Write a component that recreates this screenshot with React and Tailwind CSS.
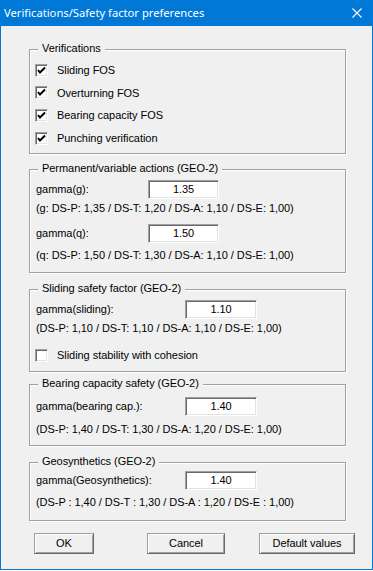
import React from 'react';

const font = { fontFamily: '"Liberation Sans", Arial, sans-serif', letterSpacing: '-0.05px' };

const CheckBox = ({ checked }) => (
  <div className="w-[13px] h-[13px] shrink-0 bg-white border border-t-[#a0a0a0] border-l-[#a0a0a0] border-b-white border-r-white shadow-[inset_1px_1px_0_#696969,inset_-1px_-1px_0_#e3e3e3]">
    {checked && (
      <svg width="11" height="11" viewBox="0 0 11 11" className="block">
        <polyline points="2,5 4,7.5 9,2.5" fill="none" stroke="#000" strokeWidth="2" />
      </svg>
    )}
  </div>
);

const Edit = ({ value, w }) => (
  <div
    className={`${w} h-[19px] bg-white flex items-center justify-center border border-t-[#a0a0a0] border-l-[#a0a0a0] border-b-white border-r-white shadow-[inset_1px_1px_0_#696969,inset_-1px_-1px_0_#e3e3e3] text-[11px] text-black`}
  >
    {value}
  </div>
);

const Group = ({ title, className, children }) => (
  <div
    className={`relative ml-[28px] w-[317px] border border-[#a0a0a0] shadow-[inset_1px_1px_0_#fff,1px_1px_0_#fff] ${className}`}
  >
    <span className="absolute left-[8px] top-[-8px] px-[4px] bg-[#f0f0f0] leading-[13px] text-[11px]">{title}</span>
    {children}
  </div>
);

const Button = ({ children, w }) => (
  <button
    className={`${w} h-[21px] bg-[#f0f0f0] text-[11px] text-black flex items-center justify-center border border-t-[#a0a0a0] border-l-[#a0a0a0] border-b-[#696969] border-r-[#696969] shadow-[inset_1px_1px_0_#fff,inset_-1px_-1px_0_#a0a0a0]`}
    style={font}
  >
    {children}
  </button>
);

export default function App() {
  const checks = ['Sliding FOS', 'Overturning FOS', 'Bearing capacity FOS', 'Punching verification'];

  return (
    <div className="w-[373px] h-[570px] bg-[#f0f0f0] border-x border-b border-[#0078d7] text-black" style={font}>
      {/* Title bar */}
      <div className="-mx-px h-[26px] bg-[#0078d7] flex items-center justify-between pl-[4px] pr-[11px]">
        <span className="text-white text-[11.2px] tracking-normal" style={{ fontFamily: '"Noto Sans", "Open Sans", sans-serif' }}>
          Verifications/Safety factor preferences
        </span>
        <svg width="10" height="10" viewBox="0 0 10 10">
          <path d="M0.5 0.5 L9.5 9.5 M9.5 0.5 L0.5 9.5" stroke="#fff" strokeWidth="1.1" />
        </svg>
      </div>

      {/* Verifications */}
      <Group title="Verifications" className="mt-[23px] h-[105px] pt-[9px] pl-[5px]">
        {checks.map((c) => (
          <div key={c} className="h-[22.67px] flex items-center text-[11px]">
            <CheckBox checked />
            <span className="ml-[9px]">{c}</span>
          </div>
        ))}
      </Group>

      {/* Permanent/variable actions */}
      <Group title="Permanent/variable actions (GEO-2)" className="mt-[15px] h-[104px] pt-[10px] pl-[6px] text-[11px]">
        <div className="flex items-center h-[19px]">
          <span className="w-[112px]">gamma(g):</span>
          <Edit value="1.35" w="w-[71px]" />
        </div>
        <div className="h-[16px] mt-[1px] flex items-center">(g: DS-P: 1,35 / DS-T: 1,20 / DS-A: 1,10 / DS-E: 1,00)</div>
        <div className="flex items-center h-[19px] mt-[8px]">
          <span className="w-[112px]">gamma(q):</span>
          <Edit value="1.50" w="w-[71px]" />
        </div>
        <div className="h-[16px] mt-[4px] flex items-center">(q: DS-P: 1,50 / DS-T: 1,30 / DS-A: 1,10 / DS-E: 1,00)</div>
      </Group>

      {/* Sliding */}
      <Group title="Sliding safety factor (GEO-2)" className="mt-[16px] h-[83px] pt-[10px] pl-[6px] text-[11px]">
        <div className="flex items-center h-[19px]">
          <span className="w-[149px]">gamma(sliding):</span>
          <Edit value="1.10" w="w-[72px]" />
        </div>
        <div className="h-[16px] mt-[1px] flex items-center">(DS-P: 1,10 / DS-T: 1,10 / DS-A: 1,10 / DS-E: 1,00)</div>
        <div className="h-[16px] mt-[11px] flex items-center -ml-px">
          <CheckBox />
          <span className="ml-[9px]">Sliding stability with cohesion</span>
        </div>
      </Group>

      {/* Bearing capacity */}
      <Group title="Bearing capacity safety (GEO-2)" className="mt-[12px] h-[62px] pt-[12px] pl-[6px] text-[11px]">
        <div className="flex items-center h-[19px]">
          <span className="w-[149px]">gamma(bearing cap.):</span>
          <Edit value="1.40" w="w-[72px]" />
        </div>
        <div className="h-[16px] mt-[5px] flex items-center">(DS-P: 1,40 / DS-T: 1,30 / DS-A: 1,20 / DS-E: 1,00)</div>
      </Group>

      {/* Geosynthetics */}
      <Group title="Geosynthetics (GEO-2)" className="mt-[16px] h-[59px] pt-[8px] pl-[6px] text-[11px]">
        <div className="flex items-center h-[19px]">
          <span className="w-[149px]">gamma(Geosynthetics):</span>
          <Edit value="1.40" w="w-[72px]" />
        </div>
        <div className="h-[16px] mt-[4px] flex items-center">(DS-P : 1,40 / DS-T : 1,30 / DS-A : 1,20 / DS-E : 1,00)</div>
      </Group>

      {/* Buttons */}
      <div className="flex mt-[12px] pl-[33px]">
        <Button w="w-[60px]">OK</Button>
        <div className="w-[53px]" />
        <Button w="w-[78px]">Cancel</Button>
        <div className="w-[34px]" />
        <Button w="w-[96px]">Default values</Button>
      </div>
    </div>
  );
}
